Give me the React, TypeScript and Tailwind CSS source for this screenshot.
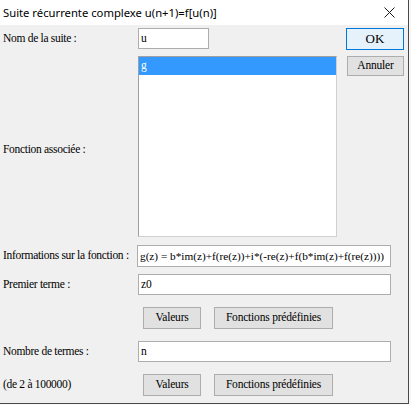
import React from "react";

const serif = { fontFamily: '"Liberation Serif", "Times New Roman", serif' };

function Btn({ w, children }: { w: string; children: React.ReactNode }) {
  return (
    <div
      className={`${w} h-[22px] flex items-center justify-center bg-[#e1e1e1] border border-[#adadad] text-[11.5px] tracking-[-0.2px] text-black`}
    >
      {children}
    </div>
  );
}

const label = "pl-[3px] text-[11.5px] tracking-[-0.3px] text-black whitespace-nowrap";

export default function App() {
  return (
    <div className="w-[411px] h-[405px] bg-[#f7f7f7] overflow-hidden" style={serif}>
      <div className="w-[409px] h-[404px] bg-[#f0f0f0] border-r border-b border-[#4a4a4a] flex flex-col">
        {/* title bar */}
        <div className="h-[25px] bg-white flex items-center justify-between pl-[3px] pr-[13px] shrink-0">
          <span
            className="text-[11.25px] text-black leading-none"
            style={{ fontFamily: '"Noto Sans", "Open Sans", sans-serif' }}
          >
            Suite récurrente complexe u(n+1)=f[u(n)]
          </span>
          <svg width="11" height="11" viewBox="0 0 11 11">
            <path d="M0.5 0.5 L10.5 10.5 M10.5 0.5 L0.5 10.5" stroke="#1a1a1a" strokeWidth="1" />
          </svg>
        </div>

        {/* top section */}
        <div className="flex">
          <div className="w-[346px] flex flex-col">
            <div className="flex items-center mt-[3px] h-[21px]">
              <div className={`w-[138px] ${label}`}>Nom de la suite :</div>
              <div className="w-[71px] h-[21px] bg-white border border-[#adadad] flex items-center pl-[2px] text-[11.5px]">
                u
              </div>
            </div>
            <div className="flex mt-[7px]">
              <div className={`w-[138px] ${label} flex items-center pt-[6px]`}>
                Fonction associée :
              </div>
              <div className="w-[199px] h-[181px] bg-white border border-[#a0a0a0] border-r-[#d0d0d0] border-b-[#d0d0d0]">
                <div className="h-[18px] bg-[#3399ff] text-white text-[11.5px] flex items-center pl-[2px]">g</div>
              </div>
            </div>
          </div>
          <div className="flex flex-col pt-[3px]">
            <div className="w-[58px] h-[22px] flex items-center justify-center bg-[#e5f1fb] border border-[#0078d7] text-[13px] text-black">
              OK
            </div>
            <div className="ml-[1px] mt-[6px] w-[57px] h-[20px] flex items-center justify-center bg-[#e1e1e1] border border-[#adadad] text-[11.5px] tracking-[-0.2px] text-black">
              Annuler
            </div>
          </div>
        </div>

        {/* Informations */}
        <div className="flex items-center mt-[8px] h-[22px]">
          <div className={`w-[137px] ${label}`}>Informations sur la fonction :</div>
          <div className="w-[254px] h-[22px] bg-white border border-[#adadad] flex items-center pl-[2px] text-[11.25px] whitespace-nowrap overflow-hidden">
            g(z) = b*im(z)+f(re(z))+i*(-re(z)+f(b*im(z)+f(re(z))))
          </div>
        </div>

        {/* Premier terme */}
        <div className="flex items-center mt-[7px] h-[21px]">
          <div className={`w-[138px] ${label}`}>Premier terme :</div>
          <div className="w-[253px] h-[21px] bg-white border border-[#adadad] flex items-center pl-[2px] text-[11.5px]">
            z0
          </div>
        </div>

        <div className="flex items-center mt-[12px] pl-[143px] gap-[13px]">
          <Btn w="w-[58px]">Valeurs</Btn>
          <Btn w="w-[119px]">Fonctions prédéfinies</Btn>
        </div>

        {/* Nombre de termes */}
        <div className="flex items-center mt-[12px] h-[21px]">
          <div className={`w-[138px] ${label}`}>Nombre de termes :</div>
          <div className="w-[253px] h-[21px] bg-white border border-[#adadad] flex items-center pl-[2px] text-[11.5px]">
            n
          </div>
        </div>

        <div className="flex items-center mt-[12px]">
          <div className={`w-[143px] ${label}`}>(de 2 à 100000)</div>
          <div className="flex gap-[13px]">
            <Btn w="w-[58px]">Valeurs</Btn>
            <Btn w="w-[119px]">Fonctions prédéfinies</Btn>
          </div>
        </div>
      </div>
    </div>
  );
}
